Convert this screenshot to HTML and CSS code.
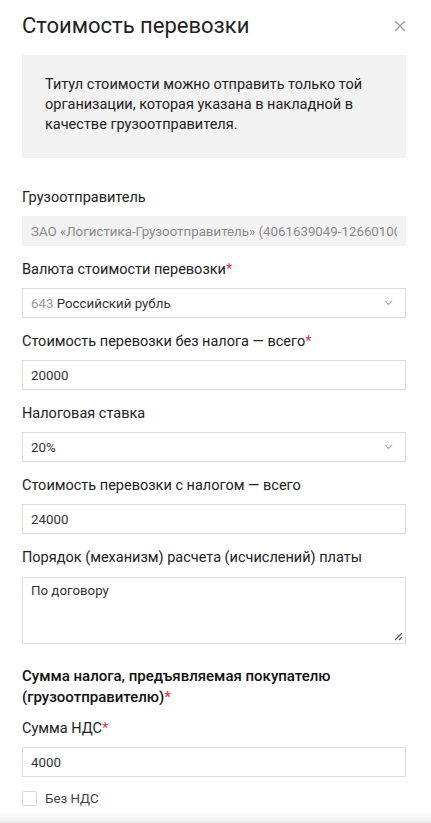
FILE: index.html
```html
<!DOCTYPE html>
<html lang="ru">
<head>
<meta charset="utf-8">
<link rel="stylesheet" href="styles.css">
</head>
<body>
<div class="modal">
  <div class="header">
    <h1 class="title">Стоимость перевозки</h1>
    <svg class="close" width="12" height="12" viewBox="0 0 12 12"><path d="M1 1L11 11M11 1L1 11" stroke="#9a9a9a" stroke-width="1.4" fill="none"/></svg>
  </div>
  <div class="notice">Титул стоимости можно отправить только той организации, которая указана в накладной в качестве грузоотправителя.</div>

  <div class="field">
    <div class="label">Грузоотправитель</div>
    <div class="input disabled"><span class="clip">ЗАО «Логистика-Грузоотправитель» (4061639049-126601001)</span></div>
  </div>
  <div class="field">
    <div class="label">Валюта стоимости перевозки<span class="req">*</span></div>
    <div class="input select"><span><span class="muted">643</span> Российский рубль</span>
      <svg class="chev" width="9" height="6" viewBox="0 0 9 6"><path d="M1 1L4.5 4.5L8 1" stroke="#aaa" stroke-width="1.2" fill="none"/></svg></div>
  </div>
  <div class="field">
    <div class="label">Стоимость перевозки без налога — всего<span class="req">*</span></div>
    <div class="input">20000</div>
  </div>
  <div class="field">
    <div class="label">Налоговая ставка</div>
    <div class="input select"><span>20%</span>
      <svg class="chev" width="9" height="6" viewBox="0 0 9 6"><path d="M1 1L4.5 4.5L8 1" stroke="#aaa" stroke-width="1.2" fill="none"/></svg></div>
  </div>
  <div class="field">
    <div class="label">Стоимость перевозки с налогом — всего</div>
    <div class="input">24000</div>
  </div>
  <div class="field">
    <div class="label label-ta">Порядок (механизм) расчета (исчислений) платы</div>
    <div class="textarea">По договору
      <svg class="grip" width="9" height="9" viewBox="0 0 9 9"><path d="M8 1L1 8M8 5L5 8" stroke="#555" stroke-width="1.2" fill="none"/></svg></div>
  </div>
  <div class="section">Сумма налога, предъявляемая покупателю (грузоотправителю)<span class="req">*</span></div>
  <div class="field">
    <div class="label">Сумма НДС<span class="req">*</span></div>
    <div class="input">4000</div>
  </div>
  <label class="check"><span class="box"></span><span class="check-text">Без НДС</span></label>
</div>
<div class="footer-shadow"></div>
</body>
</html>
```

FILE: styles.css
```css
html, body {
  margin: 0;
  padding: 0;
  background: #fff;
  overflow: hidden;
}
body {
  font-family: Roboto, "Noto Sans", sans-serif;
  color: #1f1f1f;
  width: 431px;
  height: 823px;
  position: relative;
}
.modal {
  padding: 9px 25px 0 22px;
}
.header {
  display: flex;
  justify-content: space-between;
  align-items: center;
  height: 32px;
}
.title {
  margin: 0;
  font-size: 22px;
  font-weight: 400;
  color: #222;
}
.close {
  margin-top: 2px;
}
.notice {
  margin-top: 14px;
  background: #f2f2f2;
  padding: 20px 23px 23px 23px;
  font-size: 14.5px;
  line-height: 20px;
  color: #222;
  height: 60px;
}
.notice + .field {
  margin-top: 30px;
}
.label {
  font-size: 14.5px;
  line-height: 20px;
  margin-bottom: 8px;
  color: #222;
}
.req {
  color: #e53935;
}
.input {
  box-sizing: border-box;
  height: 30px;
  border: 1px solid #dcdcdc;
  padding: 0 8px;
  display: flex;
  align-items: center;
  justify-content: space-between;
  font-size: 13.3px;
  color: #333;
  margin-bottom: 14px;
  overflow: hidden;
  white-space: nowrap;
}
.input.disabled {
  background: #f2f2f2;
  border-color: #f2f2f2;
  color: #8a8a8a;
}
.clip {
  overflow: hidden;
}
.muted {
  color: #999;
}
.chev {
  margin-right: 4px;
  flex: none;
}
.label-ta {
  margin-bottom: 9px;
}
.textarea {
  box-sizing: border-box;
  height: 67px;
  border: 1px solid #dcdcdc;
  padding: 5px 8px;
  font-size: 13.3px;
  color: #333;
  position: relative;
}
.grip {
  position: absolute;
  right: 2px;
  bottom: 2px;
}
.section {
  margin-top: 22px;
  font-size: 15px;
  font-weight: 500;
  line-height: 21px;
  color: #111;
  margin-bottom: 11px;
}
.check {
  display: flex;
  align-items: center;
  margin-top: 8px;
}
.box {
  box-sizing: border-box;
  width: 15px;
  height: 15px;
  border: 1px solid #d6d6d6;
  border-radius: 2px;
  margin-right: 8px;
}
.check-text {
  font-size: 13.3px;
  color: #444;
}
.footer-shadow {
  position: absolute;
  left: 0;
  right: 0;
  bottom: 0;
  height: 10px;
  background: linear-gradient(to bottom, rgba(0,0,0,0), rgba(0,0,0,0.06));
  border-bottom: 2px solid #ececec;
}
```
